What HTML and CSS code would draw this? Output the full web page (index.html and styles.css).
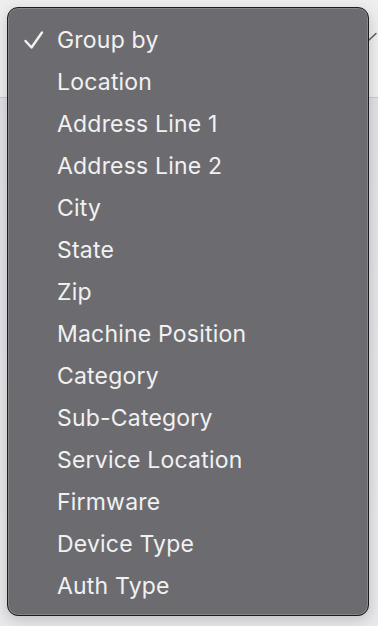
FILE: index.html
```html
<!DOCTYPE html>
<html lang="en">
<head>
<meta charset="utf-8">
<title>Group by menu</title>
<link rel="stylesheet" href="styles.css">
</head>
<body>
<div class="page">
  <div class="toolbar">
    <svg class="chevron" width="10" height="10" viewBox="0 0 10 10"><path d="M1 8 L8 1.5" stroke="#5a5a5a" stroke-width="1.4" fill="none" stroke-linecap="round"/></svg>
  </div>
  <div class="content"></div>

  <div class="menu">
    <ul class="menu-list">
      <li class="item checked">
        <span class="check"><svg width="22" height="20" viewBox="0 0 22 20"><path d="M3.5 11 L9.5 17.5 L20 2.5" stroke="#f2f2f2" stroke-width="2.4" fill="none" stroke-linecap="round" stroke-linejoin="round"/></svg></span>
        <span class="label">Group by</span>
      </li>
      <li class="item"><span class="check"></span><span class="label">Location</span></li>
      <li class="item"><span class="check"></span><span class="label">Address Line 1</span></li>
      <li class="item"><span class="check"></span><span class="label">Address Line 2</span></li>
      <li class="item"><span class="check"></span><span class="label">City</span></li>
      <li class="item"><span class="check"></span><span class="label">State</span></li>
      <li class="item"><span class="check"></span><span class="label">Zip</span></li>
      <li class="item"><span class="check"></span><span class="label">Machine Position</span></li>
      <li class="item"><span class="check"></span><span class="label">Category</span></li>
      <li class="item"><span class="check"></span><span class="label">Sub-Category</span></li>
      <li class="item"><span class="check"></span><span class="label">Service Location</span></li>
      <li class="item"><span class="check"></span><span class="label">Firmware</span></li>
      <li class="item"><span class="check"></span><span class="label">Device Type</span></li>
      <li class="item"><span class="check"></span><span class="label">Auth Type</span></li>
    </ul>
  </div>
</div>
</body>
</html>
```

FILE: styles.css
```css
* { box-sizing: border-box; }

html, body {
  margin: 0;
  padding: 0;
}

body {
  width: 378px;
  height: 626px;
  overflow: hidden;
  background: #e6e6e9;
  font-family: Inter, "Noto Sans", "Liberation Sans", sans-serif;
}

.page {
  position: relative;
  width: 378px;
  height: 626px;
  display: flex;
  flex-direction: column;
}

.toolbar {
  height: 98px;
  background: #eeeeee;
  border-bottom: 1px solid #c9c9cc;
  display: flex;
  justify-content: flex-end;
  align-items: flex-start;
  padding-top: 32px;
}

.chevron {
  display: block;
}

.content {
  flex: 1;
  background: linear-gradient(#e0e1e6, #e9e9eb);
}

.menu {
  position: absolute;
  left: 7px;
  top: 7px;
  width: 362px;
  height: 609px;
  background: #6c6c70;
  border: 1px solid #1c1c1e;
  border-radius: 11px;
  box-shadow: inset 0 0 0 1px rgba(255, 255, 255, 0.18), 0 4px 14px rgba(0, 0, 0, 0.18);
  padding: 11px 0 7px;
}

.menu-list {
  list-style: none;
  margin: 0;
  padding: 0;
}

.item {
  height: 42px;
  display: flex;
  align-items: center;
  color: #f1f1f2;
  font-size: 23px;
  letter-spacing: 0.2px;
}

.check {
  width: 49px;
  display: flex;
  justify-content: flex-end;
  padding-right: 13px;
  flex: none;
}

.check svg {
  display: block;
}

.label {
  white-space: nowrap;
}
```
